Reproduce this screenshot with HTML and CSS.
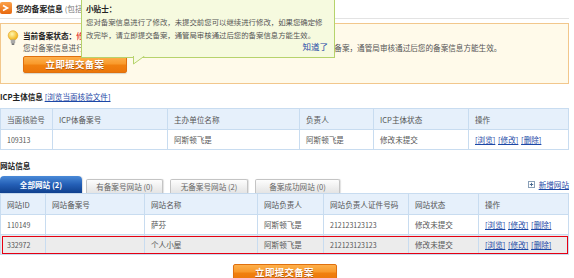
FILE: index.html
```html
<!DOCTYPE html>
<html lang="zh-CN">
<head>
<meta charset="utf-8">
<title>备案信息</title>
<link rel="stylesheet" href="styles.css">
</head>
<body>
<div class="page">
  <div class="head">
    <svg class="head-icon" width="12" height="12" viewBox="0 0 12 12">
      <defs><linearGradient id="og" x1="0" y1="0" x2="0" y2="1"><stop offset="0" stop-color="#fba14a"/><stop offset="1" stop-color="#e8680e"/></linearGradient></defs>
      <rect x="0" y="0" width="12" height="12" rx="2" fill="url(#og)"/>
      <path d="M3 3.5 L7.5 6 L3 8.5" fill="none" stroke="#fff" stroke-width="1.6"/>
    </svg>
    <b class="head-title">您的备案信息</b><span class="head-sub">(包括ICP主体信息和网站信息)</span>
  </div>

  <div class="notice">
    <svg class="bulb" width="12" height="16" viewBox="0 0 12 16">
      <defs><radialGradient id="bg" cx="0.4" cy="0.35" r="0.6"><stop offset="0" stop-color="#fff7b0"/><stop offset="1" stop-color="#f2b51c"/></radialGradient></defs>
      <circle cx="6" cy="5.5" r="4.8" fill="url(#bg)" stroke="#e0a020" stroke-width="0.6"/>
      <rect x="3.8" y="9.5" width="4.4" height="4" rx="0.8" fill="#a9a9a9"/>
      <rect x="4.6" y="13.3" width="2.8" height="1.6" rx="0.6" fill="#777"/>
    </svg>
    <div class="notice-body">
      <p class="line"><b>当前备案状态：</b><span class="red">修改未提交</span></p>
      <p class="line">您对备案信息进行了修改，未提交前您可以继续进行修改，如果您确定修改完毕，请立即提交备案，通管局审核通过后您的备案信息方能生效。</p>
      <button class="btn">立即提交备案</button>
    </div>
  </div>

  <div class="sec-title"><b>ICP主体信息</b> <a href="#" class="link">[浏览当面核验文件]</a></div>
  <table class="grid">
    <colgroup><col style="width:52px"><col style="width:115px"><col style="width:132px"><col style="width:74px"><col style="width:95px"><col></colgroup>
    <tr class="hd"><td>当面核验号</td><td>ICP体备案号</td><td>主办单位名称</td><td>负责人</td><td>ICP主体状态</td><td>操作</td></tr>
    <tr><td class="num">109313</td><td></td><td>阿斯顿飞是</td><td>阿斯顿飞是</td><td>修改未提交</td><td class="ops"><a href="#" class="link">[浏览]</a> <a href="#" class="link">[修改]</a> <a href="#" class="link">[删除]</a></td></tr>
  </table>

  <div class="sec-title sec-web"><b>网站信息</b></div>
  <div class="tabs">
    <a href="#" class="tab active">全部网站 (2)</a>
    <a href="#" class="tab t2">有备案号网站 (0)</a>
    <a href="#" class="tab t3">无备案号网站 (2)</a>
    <a href="#" class="tab t4">备案成功网站 (0)</a>
    <a href="#" class="add">
      <svg width="7" height="7" viewBox="0 0 7 7"><rect x="0.5" y="0.5" width="6" height="6" fill="#fff" stroke="#8aa0b8"/><path d="M3.5 1.8V5.2M1.8 3.5H5.2" stroke="#4a6a90" stroke-width="1"/></svg>
      <span class="link">新增网站</span>
    </a>
  </div>
  <table class="grid">
    <colgroup><col style="width:45px"><col style="width:99px"><col style="width:113px"><col style="width:66px"><col style="width:85px"><col style="width:70px"><col></colgroup>
    <tr class="hd"><td>网站ID</td><td>网站备案号</td><td>网站名称</td><td>网站负责人</td><td>网站负责人证件号码</td><td>网站状态</td><td>操作</td></tr>
    <tr><td class="num">110149</td><td></td><td>萨芬</td><td>阿斯顿飞是</td><td class="num">212123123123</td><td>修改未提交</td><td class="ops"><a href="#" class="link">[浏览]</a> <a href="#" class="link">[修改]</a> <a href="#" class="link">[删除]</a></td></tr>
    <tr class="sel"><td class="num">332972</td><td></td><td>个人小屋</td><td>阿斯顿飞是</td><td class="num">212123123123</td><td>修改未提交</td><td class="ops"><a href="#" class="link">[浏览]</a> <a href="#" class="link">[修改]</a> <a href="#" class="link">[删除]</a></td></tr>
  </table>

  <div class="foot"><button class="btn">立即提交备案</button></div>

  <div class="tip">
    <p class="tip-title"><b>小贴士：</b></p>
    <p class="tip-text">您对备案信息进行了修改，未提交前您可以继续进行修改，如果您确定修<br>改完毕，请立即提交备案，通管局审核通过后您的备案信息方能生效。</p>
    <p class="tip-close"><a href="#" class="link plain">知道了</a></p>
    <svg class="tip-arrow" width="13" height="9" viewBox="0 0 13 9">
      <polygon points="0.5,0 0.5,8 11.5,0" fill="#f6fadf"/>
      <polyline points="0.5,0 0.5,8 11.5,0" fill="none" stroke="#b6d36c" stroke-width="1"/>
    </svg>
  </div>
</div>
</body>
</html>
```

FILE: styles.css
```css
* { box-sizing: border-box; }
body {
  margin: 0;
  background: #fff;
  font-family: "Noto Sans CJK SC", "Liberation Sans", sans-serif;
  font-size: 7.6px;
  color: #444;
}
p { margin: 0; }
.page {
  position: relative;
  width: 569px;
  overflow: visible;
}
.head {
  height: 19px;
  border-bottom: 1px solid #e3e3e3;
  display: flex;
  align-items: center;
  padding-bottom: 2px;
}
.head-icon { margin-right: 4px; flex: none; }
.head-title { color: #222; font-size: 7.8px; }
.head-sub { color: #777; margin-left: 2px; }

.notice {
  margin-top: 4px;
  height: 61px;
  border: 1px solid #f2c78c;
  background: #fffaea;
  display: flex;
  padding: 6px 0 0 6px;
}
.bulb { flex: none; margin-top: 0; margin-right: 4px; }
.notice-body { flex: 1; }
.line { line-height: 12px; color: #555; white-space: nowrap; }
.line b { color: #222; }
.red { color: #e00000; }

.btn {
  display: block;
  width: 104px;
  height: 17px;
  margin-top: 2px;
  padding: 0;
  border: 1px solid #e0700e;
  border-radius: 2px;
  background: linear-gradient(#fdb04c 0%, #f99a2c 45%, #f0800f 55%, #ec760a 100%);
  color: #fff;
  font-family: "Noto Sans CJK SC", sans-serif;
  font-weight: bold;
  font-size: 9.5px;
  letter-spacing: 0.3px;
  line-height: 15px;
  text-shadow: 0 1px 0 #b2540a;
  box-shadow: 0 1px 1px rgba(0,0,0,0.15);
}

.sec-title {
  margin-top: 7px;
  margin-bottom: 5px;
  line-height: 12px;
  color: #222;
}
.sec-web { margin-top: 10px; margin-bottom: 4px; }
.link { color: #1d48a6; text-decoration: underline; }
.link.plain { text-decoration: none; }

.grid {
  width: 569px;
  border-collapse: collapse;
  table-layout: fixed;
}
.grid td {
  border: 1px solid #c8dcf0;
  height: 20px;
  padding: 0 0 0 6px;
  color: #555;
  white-space: nowrap;
  overflow: hidden;
}
.grid tr.hd td { background: #e6f0fb; height: 21px; color: #555; }
.grid td.num { color: #555; font-size: 7px; }
.grid td.ops { padding-left: 6px; }
.grid td.ops .link { margin-right: 1px; }
.grid tr.sel td { background: #ececec; }
.grid tr.sel { outline: 1.5px solid #e60012; outline-offset: -2px; }

.tabs {
  display: flex;
  align-items: flex-end;
  height: 17px;
}
.tab {
  display: flex;
  align-items: center;
  justify-content: center;
  height: 14px;
  border: 1px solid #c4c4c4;
  border-bottom: none;
  border-radius: 2px 2px 0 0;
  background: linear-gradient(#fdfdfd, #e4e4e4);
  color: #666;
  text-decoration: none;
  white-space: nowrap;
  box-shadow: 1px 0 1px rgba(0,0,0,0.12);
}
.tab.active {
  width: 82px;
  height: 17px;
  border: none;
  border-radius: 4px 4px 0 0;
  background: linear-gradient(#4a8ad8 0%, #245fb6 50%, #10408e 100%);
  color: #fff;
  font-weight: bold;
}
.tab.t2 { width: 77px; margin-left: 4px; }
.tab.t3 { width: 78px; margin-left: 7px; }
.tab.t4 { width: 85px; margin-left: 7px; }
.add {
  margin-left: auto;
  margin-bottom: 3px;
  display: flex;
  align-items: center;
  gap: 4px;
  text-decoration: none;
}

.foot {
  display: flex;
  justify-content: center;
  margin-top: 7px;
}

.tip {
  position: absolute;
  left: 81px;
  top: -3px;
  width: 254px;
  height: 61px;
  background: #f6fadf;
  border: 1px solid #b6d36c;
  padding: 4px 4px 0 4px;
  color: #555;
}
.tip-title { line-height: 13px; color: #222; }
.tip-text { line-height: 13px; white-space: nowrap; font-size: 7.4px; }
.tip-close { text-align: right; line-height: 11px; padding-right: 2px; font-size: 8.5px; }
.tip-arrow {
  position: absolute;
  left: 51px;
  top: 100%;
  margin-top: -1px;
}
```
